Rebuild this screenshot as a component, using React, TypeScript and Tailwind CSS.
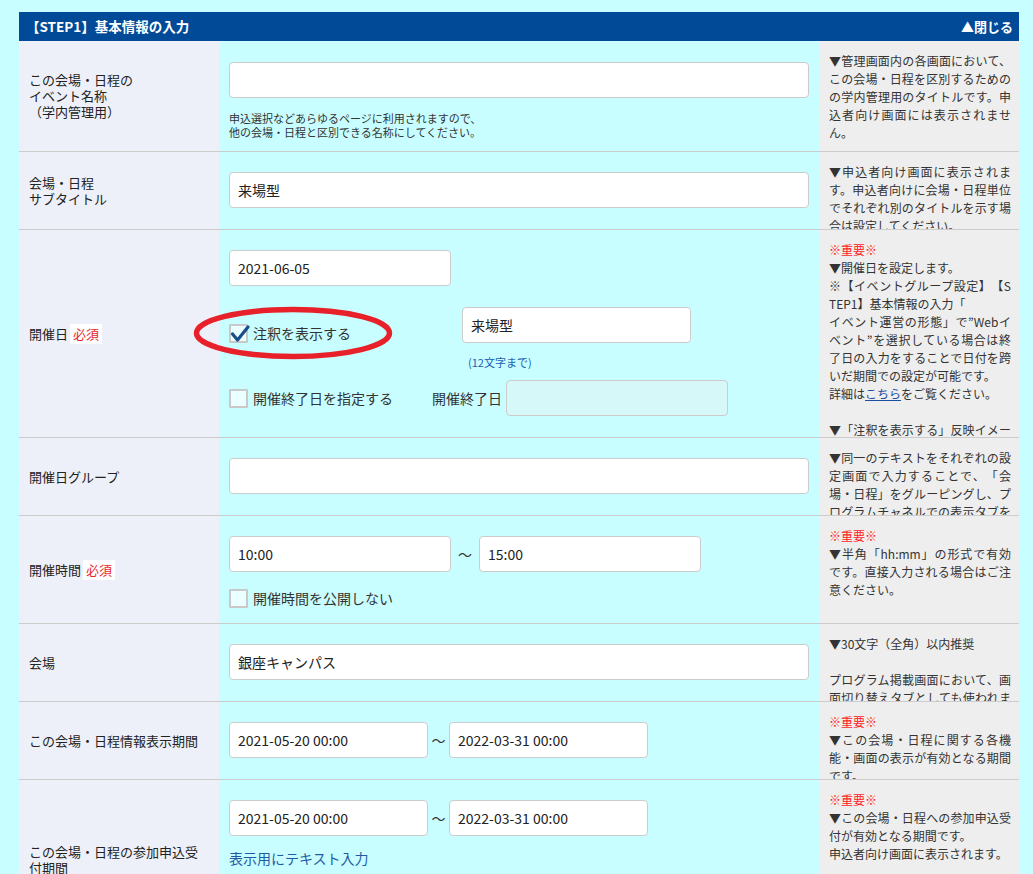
import { ReactNode } from "react";

const rowBase =
  "relative grid grid-cols-[200px_600px_200px] grid-rows-1 border-b border-[#cccccc]";

function Field({
  value = "",
  className = "",
}: {
  value?: string;
  className?: string;
}) {
  return (
    <input
      readOnly
      defaultValue={value}
      className={`h-[36px] rounded-[4px] border border-[#cccccc] px-[8px] text-[14px] text-[#222] outline-none ${className}`}
    />
  );
}

function Check({ checked = false }: { checked?: boolean }) {
  return (
    <span className="relative inline-block h-[19px] w-[19px] shrink-0 rounded-[1px] border-2 border-[#c9c9c9] bg-[#eaffff]">
      {checked && (
        <svg
          className="absolute left-[-1px] top-[-3px] overflow-visible"
          width="20"
          height="20"
          viewBox="0 0 20 20"
        >
          <path
            d="M2.5 11 L7.5 17 L18 4"
            fill="none"
            stroke="#1b4c8c"
            strokeWidth="3.2"
            strokeLinecap="round"
            strokeLinejoin="round"
          />
        </svg>
      )}
    </span>
  );
}

function Required() {
  return (
    <span className="ml-[2px] inline-flex h-[20px] items-center bg-white px-[3px] text-[#e8282b]">
      必須
    </span>
  );
}

function Important() {
  return <p className="text-[#ff1c1c]">※重要※</p>;
}

function Row({
  height,
  label,
  help,
  top = "pt-[20px]",
  children,
}: {
  height: string;
  label: ReactNode;
  help: ReactNode;
  top?: string;
  children: ReactNode;
}) {
  return (
    <div className={`${rowBase} ${height}`}>
      <div className="flex items-center bg-[#edf0f8] px-[10px] text-[13px] leading-[16px] text-[#222]">
        {label}
      </div>
      <div className={`px-[10px] ${top}`}>{children}</div>
      <div className="overflow-hidden break-all bg-[#eeeeee] pl-[10px] pr-[8px] pt-[11px] text-justify text-[12px] leading-[18px] text-[#333]">
        {help}
      </div>
    </div>
  );
}

export default function App() {
  return (
    <div className="min-h-screen bg-[#c8feff] pl-[19px] pt-[12px] font-['Noto_Sans_CJK_JP','Noto_Sans',sans-serif] [text-spacing-trim:space-all]">
      <div className="w-[1000px]">
        <div className="flex h-[29px] items-center justify-between bg-[#004a97] pl-[7px] pr-[6px] font-bold text-white">
          <span className="text-[13.5px]">【STEP1】基本情報の入力</span>
          <span className="text-[13px]">▲閉じる</span>
        </div>

        <Row
          height="h-[111px]"
          top="pt-[21px]"
          label={
            <span>
              この会場・日程の
              <br />
              イベント名称
              <br />
              （学内管理用）
            </span>
          }
          help={
            <p>
              ▼管理画面内の各画面において、この会場・日程を区別するためのの学内管理用のタイトルです。申込者向け画面には表示されません。
            </p>
          }
        >
          <Field className="w-[580px] bg-white" />
          <p className="mt-[13px] text-[11px] leading-[14px] text-[#333]">
            申込選択などあらゆるページに利用されますので、
            <br />
            他の会場・日程と区別できる名称にしてください。
          </p>
        </Row>

        <Row
          height="h-[78px]"
          label={
            <span>
              会場・日程
              <br />
              サブタイトル
            </span>
          }
          help={
            <p>
              ▼申込者向け画面に表示されます。申込者向けに会場・日程単位でそれぞれ別のタイトルを示す場合は設定してください。
            </p>
          }
        >
          <Field value="来場型" className="w-[580px] bg-white" />
        </Row>

        <Row
          height="h-[208px]"
          label={
            <span className="flex items-center">
              開催日
              <Required />
            </span>
          }
          help={
            <>
              <Important />
              <p>▼開催日を設定します。</p>
              <p className="[text-align-last:justify]">
                ※【イベントグループ設定】【S
              </p>
              <p>
                TEP1】基本情報の入力「
                <br />
                イベント運営の形態」で”Webイベント”を選択している場合は終了日の入力をすることで日付を跨いだ期間での設定が可能です。
                <br />
                詳細は
                <a href="#" className="text-[#1a4fa0] underline">
                  こちら
                </a>
                をご覧ください。
                <br />
                <br />
                ▼「注釈を表示する」反映イメージ
              </p>
            </>
          }
        >
          <Field value="2021-06-05" className="w-[222px] bg-white" />
          <div className="mt-[21px] flex">
            <div className="flex h-[36px] w-[233px] items-end">
              <label className="flex items-center gap-[5px] text-[14px] leading-[20px] text-[#333]">
                <Check checked />
                注釈を表示する
              </label>
            </div>
            <div>
              <Field value="来場型" className="w-[229px] bg-white" />
              <p className="mt-[12px] pl-[6px] text-[11px] leading-[14px] text-[#1a5fb4]">
                (12文字まで)
              </p>
            </div>
          </div>
          <div className="mt-[11px] flex items-center text-[14px] leading-[20px] text-[#333]">
            <label className="flex w-[203px] items-center gap-[5px]">
              <Check />
              開催終了日を指定する
            </label>
            <span>開催終了日</span>
            <Field className="ml-[4px] w-[222px] bg-[#d6f8f8]" />
          </div>
          <svg
            className="pointer-events-none absolute left-[174px] top-[75px]"
            width="200"
            height="56"
            viewBox="0 0 200 56"
          >
            <ellipse
              cx="100"
              cy="28"
              rx="96.5"
              ry="23.5"
              fill="none"
              stroke="#e8202a"
              strokeWidth="5.5"
            />
          </svg>
        </Row>

        <Row
          height="h-[78px]"
          label="開催日グループ"
          help={
            <p>
              ▼同一のテキストをそれぞれの設定画面で入力することで、「会場・日程」をグルーピングし、プログラムチャネルでの表示タブをまとめることができます。
            </p>
          }
        >
          <Field className="w-[580px] bg-white" />
        </Row>

        <Row
          height="h-[108px]"
          label={
            <span className="flex items-center">
              開催時間
              <Required />
            </span>
          }
          help={
            <>
              <Important />
              <p>
                ▼半角「hh:mm」の形式で有効です。直接入力される場合はご注意ください。
              </p>
            </>
          }
        >
          <div className="flex items-center">
            <Field value="10:00" className="w-[222px] bg-white" />
            <span className="w-[28px] text-center text-[14px] text-[#333]">
              ～
            </span>
            <Field value="15:00" className="w-[222px] bg-white" />
          </div>
          <label className="mt-[16px] flex items-center gap-[5px] text-[14px] leading-[20px] text-[#333]">
            <Check />
            開催時間を公開しない
          </label>
        </Row>

        <Row
          height="h-[78px]"
          label="会場"
          help={
            <>
              <p>▼30文字（全角）以内推奨</p>
              <br />
              <p>
                プログラム掲載画面において、画面切り替えタブとしても使われます。
              </p>
            </>
          }
        >
          <Field value="銀座キャンパス" className="w-[580px] bg-white" />
        </Row>

        <Row
          height="h-[78px]"
          label="この会場・日程情報表示期間"
          help={
            <>
              <Important />
              <p>
                ▼この会場・日程に関する各機能・画面の表示が有効となる期間です。
              </p>
            </>
          }
        >
          <div className="flex items-center">
            <Field value="2021-05-20 00:00" className="w-[199px] bg-white" />
            <span className="w-[21px] text-center text-[14px] text-[#333]">
              ～
            </span>
            <Field value="2022-03-31 00:00" className="w-[199px] bg-white" />
          </div>
        </Row>

        <Row
          height="h-[160px]"
          label="この会場・日程の参加申込受付期間"
          help={
            <>
              <Important />
              <p>
                ▼この会場・日程への参加申込受付が有効となる期間です。
                <br />
                申込者向け画面に表示されます。
              </p>
            </>
          }
        >
          <div className="flex items-center">
            <Field value="2021-05-20 00:00" className="w-[199px] bg-white" />
            <span className="w-[21px] text-center text-[14px] text-[#333]">
              ～
            </span>
            <Field value="2022-03-31 00:00" className="w-[199px] bg-white" />
          </div>
          <a
            href="#"
            className="mt-[12px] block text-[14px] leading-[20px] text-[#1f5aa6]"
          >
            表示用にテキスト入力
          </a>
        </Row>
      </div>
    </div>
  );
}
